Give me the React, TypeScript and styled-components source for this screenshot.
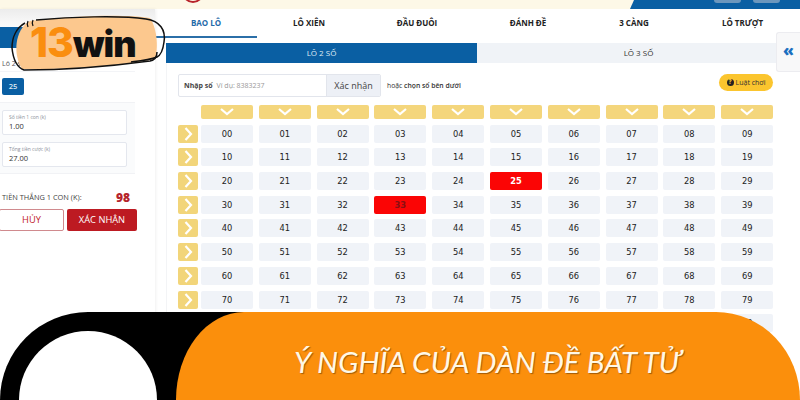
import styled, { createGlobalStyle } from "styled-components";

const GlobalStyle = createGlobalStyle`
  html, body { margin: 0; padding: 0; background: #fff; }
  * { box-sizing: border-box; }
`;

const mainTabs = ["BAO LÔ", "LÔ XIÊN", "ĐẦU ĐUÔI", "ĐÁNH ĐỀ", "3 CÀNG", "LÔ TRƯỢT"];
const rows = [0, 1, 2, 3, 4, 5, 6, 7, 8];
const cols = [0, 1, 2, 3, 4, 5, 6, 7, 8, 9];
const redCells: Record<string, string> = { "25": "#fff", "33": "#8a0f12" };

const Chevron = ({ dir }: { dir: "down" | "right" }) => (
  <svg width="14" height="14" viewBox="0 0 14 14" fill="none">
    <path
      d={dir === "down" ? "M1 4 L7 9 L13 4" : "M4.5 1 L10 7 L4.5 13"}
      stroke="#fff"
      strokeWidth="2.2"
    />
  </svg>
);

const Logo = () => (
  <LogoBox>
    <LogoShape width="170" height="80" viewBox="0 0 170 80" fill="none">
      <path
        d="M30 21 C60 17 120 13 150 18 C158 30 158 50 155 59 C120 66 60 70 22 69 C13 55 14 30 30 21 Z"
        fill="#fcc88e"
      />
      <path
        d="M36 20 C70 17 120 15 146 19 C160 21 166 30 164 42 C163 50 161 55 157 57 C150 60 140 61 131 62"
        stroke="#111"
        strokeWidth="1.5"
      />
      <path
        d="M25 23 C16 28 12 38 12 48 C13 58 16 67 24 70 C70 70 120 65 150 61 C155 60 157 56 157 52"
        stroke="#111"
        strokeWidth="1.5"
      />
      <path d="M28 21 C27 23 27 25 28 27 M33 20 C32 22 32 24 33 26" stroke="#111" strokeWidth="1.3" />
    </LogoShape>
    <LogoText>
      <LogoNum>13</LogoNum>
      <LogoWord>win</LogoWord>
    </LogoText>
  </LogoBox>
);

export default function App() {
  return (
    <Page>
      <GlobalStyle />
      <TopStrip>
        <TopLeft>
          <RedRing />
        </TopLeft>
        <TopRight>
          <TopBtn />
          <TopBtn />
        </TopRight>
      </TopStrip>
      <Body>
        <Sidebar>
          <SideHead />
          <SideLabel>Lô 2 số</SideLabel>
          <ChipRow>
            <Chip>25</Chip>
          </ChipRow>
          <FieldPanel>
            <Field>
              <FieldLabel>Số tiền 1 con (k)</FieldLabel>
              <FieldValue>1.00</FieldValue>
            </Field>
            <Field>
              <FieldLabel>Tổng tiền cược (k)</FieldLabel>
              <FieldValue>27.00</FieldValue>
            </Field>
          </FieldPanel>
          <WinRow>
            <WinLabel>TIỀN THẮNG 1 CON (K):</WinLabel>
            <WinValue>98</WinValue>
          </WinRow>
          <ActionRow>
            <CancelBtn>HỦY</CancelBtn>
            <ConfirmBtn>XÁC NHẬN</ConfirmBtn>
          </ActionRow>
        </Sidebar>
        <Main>
          <Tabs>
            {mainTabs.map((t, i) => (
              <Tab key={t} $active={i === 0}>
                {t}
              </Tab>
            ))}
          </Tabs>
          <SubTabs>
            <SubTab $active>LÔ 2 SỐ</SubTab>
            <SubTab>LÔ 3 SỐ</SubTab>
          </SubTabs>
          <Content>
            <InputRow>
              <InputGroup>
                <InputLabel>Nhập số</InputLabel>
                <InputHint>Ví dụ: 8383237</InputHint>
                <InputBtn>Xác nhận</InputBtn>
              </InputGroup>
              <OrText>
                hoặc <b>chọn số bên dưới</b>
              </OrText>
              <RuleBtn>
                <RuleIcon>?</RuleIcon>
                Luật chơi
              </RuleBtn>
            </InputRow>
            <Grid>
              <span />
              {cols.map((c) => (
                <ColHead key={c}>
                  <Chevron dir="down" />
                </ColHead>
              ))}
              {rows.map((r) => (
                <GridRow key={r}>
                  <RowHead>
                    <Chevron dir="right" />
                  </RowHead>
                  {cols.map((c) => {
                    const n = `${r}${c}`;
                    return (
                      <Cell key={n} $red={n in redCells} $text={redCells[n]}>
                        {n}
                      </Cell>
                    );
                  })}
                </GridRow>
              ))}
            </Grid>
          </Content>
          <SideToggle>«</SideToggle>
        </Main>
      </Body>
      <Logo />
      <Banner>
        <BlackShape>
          <WhiteCircle />
        </BlackShape>
        <OrangeShape>
          <Title>Ý NGHĨA CỦA DÀN ĐỀ BẤT TỬ</Title>
        </OrangeShape>
      </Banner>
    </Page>
  );
}

const Page = styled.div`
  position: relative;
  width: 800px;
  height: 400px;
  overflow: hidden;
  background: #fff;
  font-family: "Open Sans", "Noto Sans", sans-serif;
  color: #222;
`;

const TopStrip = styled.div`
  display: flex;
  height: 9px;
  background: #fdf8e7;
`;

const TopLeft = styled.div`
  flex: 1;
  padding-left: 182px;
`;

const RedRing = styled.div`
  width: 22px;
  height: 22px;
  margin-top: -19px;
  border: 2px solid #b8232a;
  border-radius: 50%;
`;

const TopRight = styled.div`
  width: 170px;
  display: flex;
  justify-content: flex-end;
  gap: 12px;
  padding-right: 20px;
  background: #0a5fa3;
  clip-path: polygon(4px 0, 100% 0, 100% 100%, 0 100%);
`;

const TopBtn = styled.div`
  width: 27px;
  height: 3px;
  background: #6c97bd;
  border-radius: 0 0 3px 3px;
`;

const Body = styled.div`
  display: flex;
  height: 391px;
`;

const Sidebar = styled.aside`
  width: 155px;
  flex-shrink: 0;
  background: linear-gradient(#ececec 0, #f8f8f8 14px, #fff 30px);
  box-shadow: 1px 0 3px rgba(0, 0, 0, 0.06);
`;

const SideHead = styled.div`
  width: 30px;
  height: 21px;
  margin-top: 18px;
  background: #0a5fa3;
  border-radius: 0 4px 4px 0;
`;

const SideLabel = styled.div`
  margin: 9px 0 0 2px;
  height: 14px;
  font-size: 7px;
  line-height: 14px;
  color: #555;
`;

const ChipRow = styled.div`
  height: 31px;
  padding: 6px 0 0 2px;
  border-top: 1px solid #f3f4f7;
  width: 135px;
`;

const Chip = styled.div`
  width: 22px;
  height: 17px;
  background: #0a5fa3;
  color: #dfeaf4;
  border-radius: 2px;
  font-size: 7.5px;
  font-weight: 600;
  line-height: 17px;
  text-align: center;
`;

const FieldPanel = styled.div`
  width: 135px;
  height: 72px;
  padding: 7px 8px 0 2px;
  display: flex;
  flex-direction: column;
  gap: 7px;
  background: #fafbfc;
  border-top: 1px solid #f1f2f5;
  border-bottom: 1px solid #f1f2f5;
`;

const Field = styled.div`
  height: 25px;
  padding: 2px 0 0 6px;
  background: #fff;
  border: 1px solid #e4e7ee;
  border-radius: 2px;
`;

const FieldLabel = styled.div`
  font-size: 5px;
  line-height: 8px;
  color: #8a8f98;
`;

const FieldValue = styled.div`
  font-size: 7.5px;
  font-weight: 500;
  line-height: 11px;
  color: #333;
`;

const WinRow = styled.div`
  display: flex;
  align-items: center;
  justify-content: space-between;
  width: 128px;
  height: 14px;
  margin: 16px 0 0 2px;
`;

const WinLabel = styled.div`
  font-size: 7.4px;
  color: #444;
  white-space: nowrap;
`;

const WinValue = styled.div`
  font-size: 12px;
  font-weight: 800;
  color: #b5242b;
`;

const ActionRow = styled.div`
  display: flex;
  gap: 3px;
  margin: 5px 0 0 -1px;
`;

const CancelBtn = styled.div`
  width: 65px;
  height: 22px;
  background: #fff;
  color: #c0222a;
  border: 1px solid #d08a8e;
  border-radius: 2px;
  font-size: 9.3px;
  font-weight: 500;
  line-height: 20px;
  text-align: center;
`;

const ConfirmBtn = styled.div`
  width: 70px;
  height: 22px;
  background: #bd1a22;
  color: #fff;
  border-radius: 2px;
  font-size: 9.3px;
  font-weight: 500;
  line-height: 22px;
  text-align: center;
`;

const Main = styled.main`
  position: relative;
  flex: 1;
  min-width: 0;
`;

const Tabs = styled.nav`
  display: grid;
  grid-template-columns: 102px 104px 112px 110px 102px 115px;
  height: 23px;
`;

const Tab = styled.div<{ $active?: boolean }>`
  font-size: 8px;
  font-weight: 700;
  line-height: 27px;
  text-align: center;
  color: ${(p) => (p.$active ? "#1f6aa8" : "#222")};
  border-bottom: ${(p) => (p.$active ? "2px solid #2b6fa8" : "none")};
`;

const SubTabs = styled.div`
  display: flex;
  width: 634px;
  height: 20px;
  margin: 11px 0 0 11px;
`;

const SubTab = styled.div<{ $active?: boolean }>`
  width: 311px;
  flex: ${(p) => (p.$active ? "none" : "1")};
  background: ${(p) => (p.$active ? "#0a5fa3" : "#f0f3f7")};
  color: ${(p) => (p.$active ? "#dfeaf4" : "#333")};
  font-size: 8px;
  line-height: 20px;
  text-align: center;
`;

const Content = styled.section`
  margin-left: 11px;
  padding: 11px 27px 0 11px;
  height: 340px;
  border-left: 1px solid #f3f4f6;
`;

const InputRow = styled.div`
  display: flex;
  align-items: flex-start;
  height: 31px;
`;

const InputGroup = styled.div`
  display: flex;
  align-items: center;
  width: 203px;
  height: 23px;
  border: 1px solid #e2e5ec;
  border-radius: 2px;
  overflow: hidden;
`;

const InputLabel = styled.span`
  margin-left: 5px;
  font-size: 7px;
  font-weight: 700;
  color: #444;
  white-space: nowrap;
`;

const InputHint = styled.span`
  flex: 1;
  margin-left: 4px;
  font-size: 7px;
  color: #999;
  white-space: nowrap;
`;

const InputBtn = styled.span`
  width: 54px;
  height: 100%;
  background: #edf0f6;
  border-left: 1px solid #e2e5ec;
  font-size: 9px;
  line-height: 21px;
  text-align: center;
  color: #444;
`;

const OrText = styled.div`
  flex: 1;
  margin-left: 6px;
  font-size: 6.8px;
  line-height: 23px;
  color: #333;
  white-space: nowrap;

  b {
    font-weight: 600;
  }
`;

const RuleBtn = styled.div`
  display: flex;
  align-items: center;
  justify-content: center;
  gap: 2px;
  width: 54px;
  height: 17px;
  background: #fbc52e;
  border-radius: 9px;
  font-size: 7px;
  color: #333;
`;

const RuleIcon = styled.span`
  width: 7px;
  height: 7px;
  border-radius: 50%;
  background: #222;
  color: #fbc52e;
  font-size: 6px;
  font-weight: 800;
  line-height: 7px;
  text-align: center;
`;

const Grid = styled.div`
  display: grid;
  grid-template-columns: 17.2px repeat(10, 52px);
  grid-template-rows: 14px;
  grid-auto-rows: 18px;
  column-gap: 5.8px;
  row-gap: 5.7px;
`;

const GridRow = styled.div`
  display: contents;
`;

const ColHead = styled.div`
  display: flex;
  align-items: center;
  justify-content: center;
  background: #f4d67c;
  border-radius: 2px;
`;

const RowHead = styled.div`
  display: flex;
  align-items: center;
  justify-content: center;
  width: 20px;
  background: #f2d57a;
  border-radius: 2px;
`;

const Cell = styled.div<{ $red?: boolean; $text?: string }>`
  background: ${(p) => (p.$red ? "#fb0505" : "#f0f3f8")};
  color: ${(p) => p.$text ?? "#222"};
  border-radius: 2px;
  font-family: "DejaVu Sans", sans-serif;
  font-size: 8.3px;
  font-weight: ${(p) => (p.$red ? 700 : 500)};
  line-height: 18px;
  text-align: center;
`;

const SideToggle = styled.div`
  position: absolute;
  top: 23px;
  right: 0;
  width: 24px;
  height: 40px;
  background: #f8f8f9;
  border: 1px solid #ececf0;
  border-right: none;
  border-radius: 3px 0 0 3px;
  color: #1a6fc0;
  font-size: 16px;
  font-weight: 800;
  line-height: 34px;
  text-align: center;
`;

const LogoBox = styled.div`
  position: absolute;
  top: 0;
  left: 0;
  width: 170px;
  height: 80px;
`;

const LogoShape = styled.svg`
  display: block;
`;

const LogoText = styled.div`
  position: absolute;
  top: 18px;
  left: 30px;
  font-family: "Inter", "Liberation Sans", sans-serif;
  font-size: 41px;
  font-weight: 800;
  line-height: 48px;
  color: #111;
`;

const LogoNum = styled.span`
  color: #fa8e0f;
  letter-spacing: -1px;
`;

const LogoWord = styled.span`
  font-size: 36px;
  font-weight: 900;
  letter-spacing: -1px;
`;

const Banner = styled.div`
  position: absolute;
  left: 0;
  right: 0;
  bottom: 0;
  height: 88px;
`;

const BlackShape = styled.div`
  position: absolute;
  top: 0;
  left: 0;
  width: 300px;
  height: 100%;
  padding: 19px 0 0 19px;
  background: #000;
  border-radius: 88px 0 0 0;
`;

const WhiteCircle = styled.div`
  width: 138px;
  height: 138px;
  background: #fff;
  border-radius: 50%;
`;

const OrangeShape = styled.div`
  position: absolute;
  top: 0;
  left: 176px;
  right: 0;
  height: 100%;
  display: flex;
  justify-content: center;
  padding-top: 31px;
  background: #fb8f0c;
  border-radius: 68px 84px 0 0 / 88px 88px 0 0;
`;

const Title = styled.div`
  font-family: "Lato", "Open Sans", sans-serif;
  font-size: 29.7px;
  font-style: italic;
  line-height: 38px;
  color: #fff8e6;
  text-shadow: 1px 1px 1px rgba(90, 50, 0, 0.55);
  white-space: nowrap;
`;
